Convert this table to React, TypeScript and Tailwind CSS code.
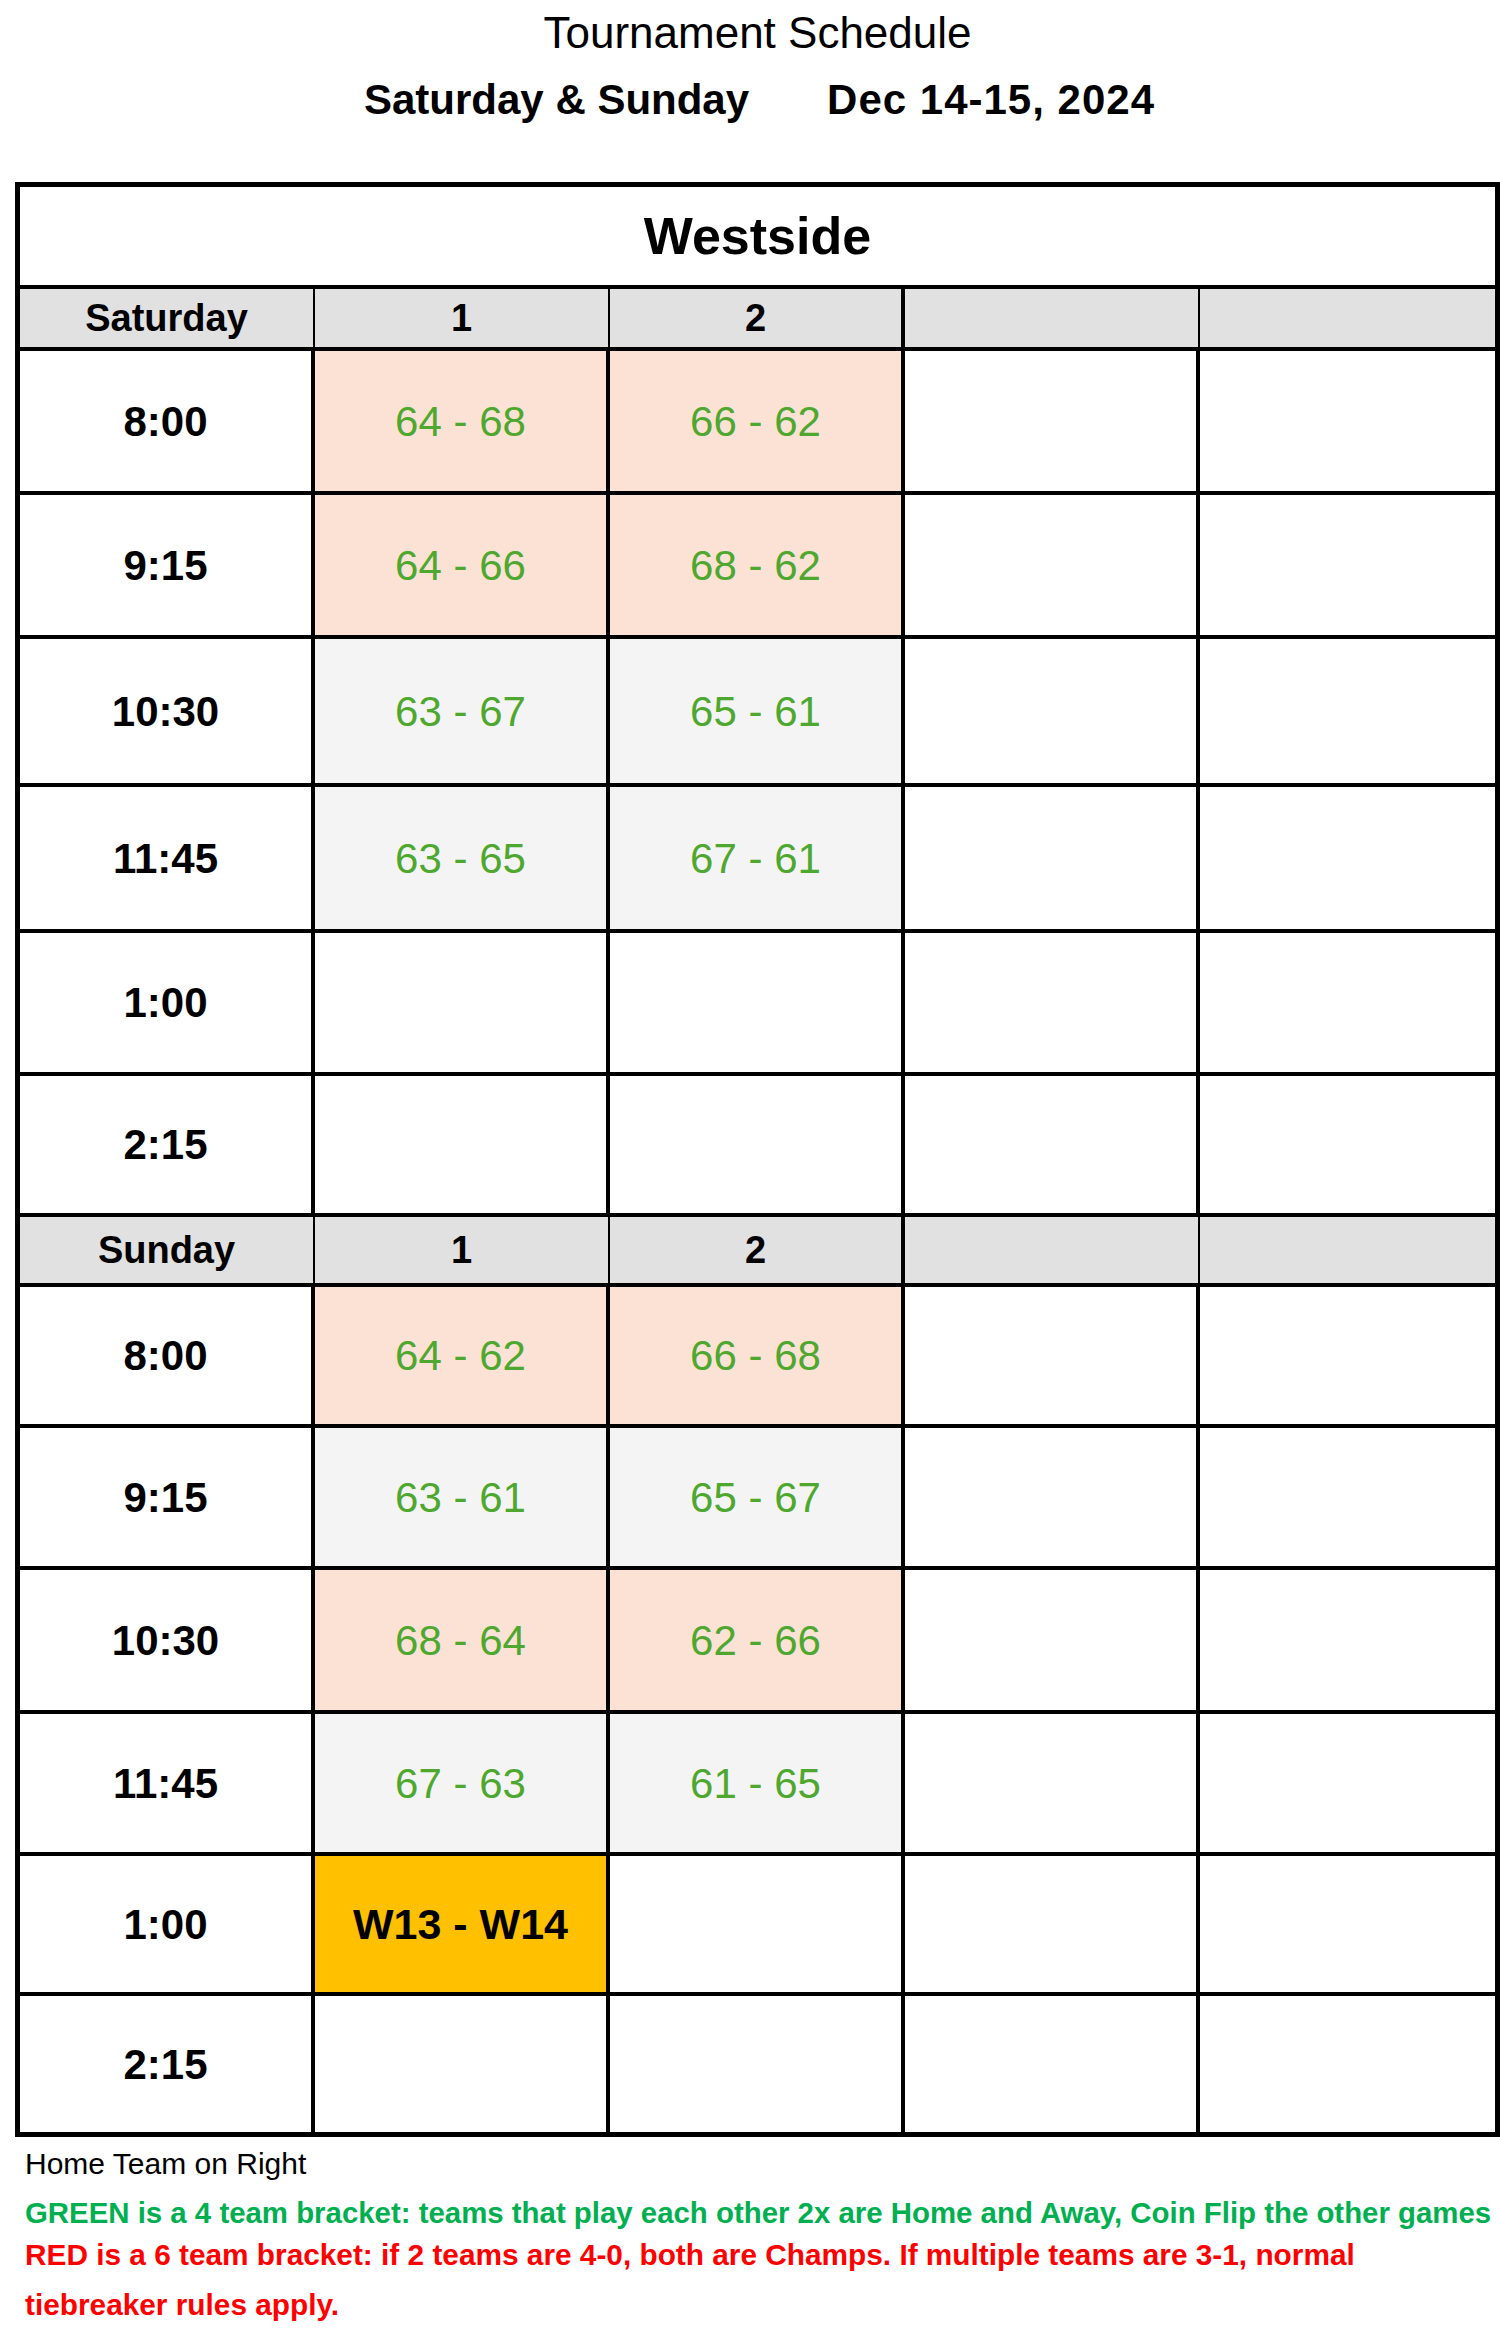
import React from "react";

type CellData = { t?: string; bg?: "salmon" | "gray" | "gold" | "white" };
type RowData = { time: string; h: string; cells: CellData[] };

const BG: Record<string, string> = {
  salmon: "bg-[#fbe2d5]",
  gray: "bg-[#f4f4f4]",
  gold: "bg-[#ffc000]",
  white: "bg-white",
};

const SAT: RowData[] = [
  { time: "8:00", h: "h-[144px]", cells: [{ t: "64 - 68", bg: "salmon" }, { t: "66 - 62", bg: "salmon" }] },
  { time: "9:15", h: "h-[144px]", cells: [{ t: "64 - 66", bg: "salmon" }, { t: "68 - 62", bg: "salmon" }] },
  { time: "10:30", h: "h-[148px]", cells: [{ t: "63 - 67", bg: "gray" }, { t: "65 - 61", bg: "gray" }] },
  { time: "11:45", h: "h-[146px]", cells: [{ t: "63 - 65", bg: "gray" }, { t: "67 - 61", bg: "gray" }] },
  { time: "1:00", h: "h-[143px]", cells: [{}, {}] },
  { time: "2:15", h: "h-[141px]", cells: [{}, {}] },
];

const SUN: RowData[] = [
  { time: "8:00", h: "h-[141px]", cells: [{ t: "64 - 62", bg: "salmon" }, { t: "66 - 68", bg: "salmon" }] },
  { time: "9:15", h: "h-[142px]", cells: [{ t: "63 - 61", bg: "gray" }, { t: "65 - 67", bg: "gray" }] },
  { time: "10:30", h: "h-[144px]", cells: [{ t: "68 - 64", bg: "salmon" }, { t: "62 - 66", bg: "salmon" }] },
  { time: "11:45", h: "h-[142px]", cells: [{ t: "67 - 63", bg: "gray" }, { t: "61 - 65", bg: "gray" }] },
  { time: "1:00", h: "h-[140px]", cells: [{ t: "W13 - W14", bg: "gold" }, {}] },
  { time: "2:15", h: "h-[136px]", cells: [{}, {}] },
];

function Row({ row, last }: { row: RowData; last?: boolean }) {
  return (
    <div className={`grid grid-cols-5 ${row.h} ${last ? "" : "border-b-4 border-black"}`}>
      <div className="flex items-center justify-center border-r-4 border-black bg-white text-[42px] font-bold text-black">
        {row.time}
      </div>
      {row.cells.map((c, i) => {
        const gold = c.bg === "gold";
        return (
          <div
            key={i}
            className={`flex items-center justify-center border-r-4 border-black ${BG[c.bg ?? "white"]} ${
              gold ? "text-[43px] font-bold text-black" : "text-[42px] text-[#4ea72e]"
            }`}
          >
            {c.t ?? ""}
          </div>
        );
      })}
      <div className="border-r-4 border-black bg-white" />
      <div className="bg-white" />
    </div>
  );
}

function Header({ day, h }: { day: string; h: string }) {
  return (
    <div className={`grid grid-cols-5 ${h} border-b-4 border-black bg-[#e1e1e1] text-[38px] font-bold text-black`}>
      <div className="flex items-center justify-center border-r-2 border-black">{day}</div>
      <div className="flex items-center justify-center border-r-2 border-black">1</div>
      <div className="flex items-center justify-center border-r-4 border-black">2</div>
      <div className="border-r-2 border-black" />
      <div />
    </div>
  );
}

export default function App() {
  return (
    <div
      className="relative h-[2328px] w-[1500px] overflow-hidden bg-white text-black"
      style={{ fontFamily: '"Liberation Sans", Arial, sans-serif' }}
    >
      <div className="ml-[15px] w-[1485px] pt-[8px]">
        <div className="h-[50px] text-center text-[44px] leading-[50px]">Tournament Schedule</div>
        <div className="mt-[18px] flex h-[48px] justify-center gap-[78px] pl-[4px] text-[42px] font-bold leading-[48px]">
          <span>Saturday &amp; Sunday</span>
          <span className="tracking-[1px]">Dec 14-15, 2024</span>
        </div>
      </div>

      <div className="ml-[15px] mt-[58px] w-[1485px] border-[5px] border-black">
        <div className="flex h-[102px] items-center justify-center border-b-4 border-black bg-white text-[52px] font-bold">
          Westside
        </div>
        <Header day="Saturday" h="h-[62px]" />
        {SAT.map((r, i) => (
          <Row key={"s" + i} row={r} />
        ))}
        <Header day="Sunday" h="h-[70px]" />
        {SUN.map((r, i) => (
          <Row key={"u" + i} row={r} last={i === SUN.length - 1} />
        ))}
      </div>

      <div className="pl-[25px]">
        <div className="mt-[7px] h-[40px] text-[30px] leading-[40px]">Home Team on Right</div>
        <div className="mt-[9px] h-[40px] whitespace-nowrap text-[29.4px] font-bold leading-[40px] text-[#00b050]">
          GREEN is a 4 team bracket: teams that play each other 2x are Home and Away, Coin Flip the other games
        </div>
        <div className="-mt-[3px] whitespace-nowrap text-[29.8px] font-bold leading-[50px] text-[#ff0000]">
          RED is a 6 team bracket: if 2 teams are 4-0, both are Champs. If multiple teams are 3-1, normal
          <br />
          tiebreaker rules apply.
        </div>
      </div>
    </div>
  );
}
